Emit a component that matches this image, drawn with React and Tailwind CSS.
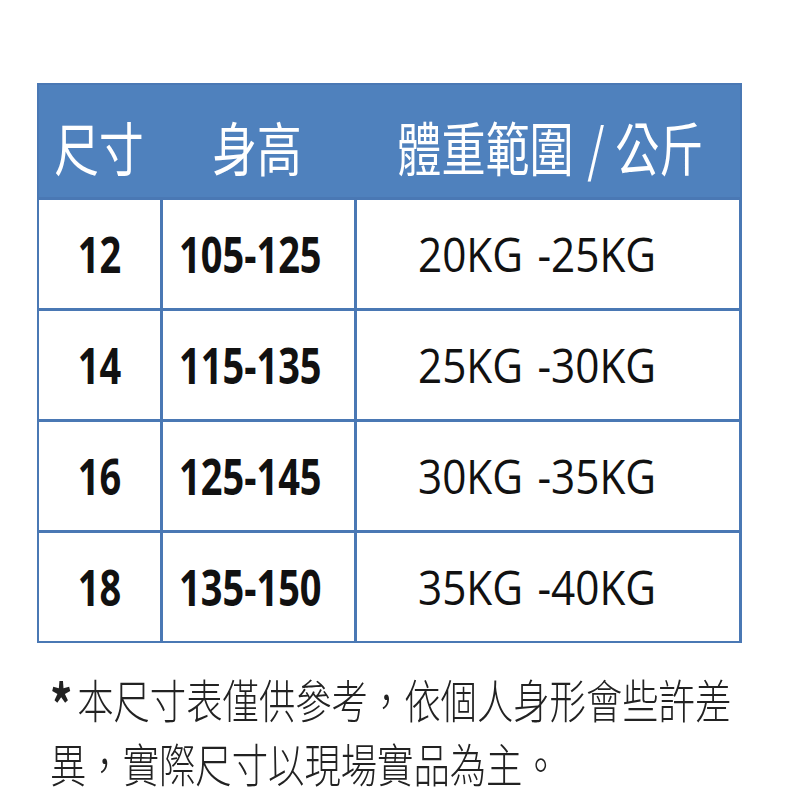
import React from "react";

const rows = [
  ["12", "105-125", "20KG", "25KG"],
  ["14", "115-135", "25KG", "30KG"],
  ["16", "125-145", "30KG", "35KG"],
  ["18", "135-150", "35KG", "40KG"],
];

const cjk = { fontFamily: '"Noto Sans CJK TC", "Noto Sans", sans-serif' };
const latin = { fontFamily: '"Open Sans", "Noto Sans", sans-serif' };

export default function App() {
  return (
    <div className="w-[800px] h-[800px] bg-white overflow-hidden relative">
      <div className="ml-[37px] mt-[83px] w-[705px] bg-[#4a78b4] p-[2px] flex flex-col gap-[3px]">
        <div className="h-[112px] bg-[#4f81bd] grid grid-cols-[121px_194px_384px] text-white" style={cjk}>
          <div className="flex items-center justify-center pt-[10px]">
            <span className="inline-block text-[58px] leading-none scale-x-[0.77] whitespace-nowrap">尺寸</span>
          </div>
          <div className="flex items-center justify-center pt-[10px]">
            <span className="inline-block text-[58px] leading-none scale-x-[0.77] whitespace-nowrap">身高</span>
          </div>
          <div className="flex items-center justify-center pt-[10px] pl-[8px]">
            <span className="inline-block text-[58px] leading-none scale-x-[0.76] whitespace-nowrap">體重範圍<span className="inline-block w-[18px]"></span>/<span className="inline-block w-[14px]"></span>公斤</span>
          </div>
        </div>
        {rows.map((r) => (
          <div key={r[0]} className="h-[108px] grid grid-cols-[121px_191px_382px] gap-[3px]">
            <div className="bg-white flex items-center justify-center">
              <span className="inline-block text-[50px] font-bold leading-none text-[#111] scale-x-[0.76] whitespace-nowrap" style={latin}>{r[0]}</span>
            </div>
            <div className="bg-white flex items-center pl-[16px]">
              <span className="inline-block text-[50px] font-bold leading-none text-[#111] scale-x-[0.76] origin-left whitespace-nowrap" style={latin}>{r[1]}</span>
            </div>
            <div className="bg-white flex items-center pl-[61px]">
              <span className="inline-block text-[47px] leading-none text-[#111] scale-x-[0.9] origin-left whitespace-nowrap" style={latin}>
                {r[2]}<span className="inline-block w-[16px]"></span>-{r[3]}
              </span>
            </div>
          </div>
        ))}
      </div>
      <div className="ml-[50px] mt-[23px] text-[#222]" style={cjk}>
        <div className="h-[64px] whitespace-nowrap flex items-center">
          <span className="inline-block text-[46px] leading-[64px] font-light scale-x-[0.79] origin-left whitespace-nowrap">
            <span className="inline-block font-bold text-[56px] leading-[30px] mr-[6px] translate-y-[8px]">*</span>本尺寸表僅供參考，依個人身形會些許差
          </span>
        </div>
        <div className="h-[64px] whitespace-nowrap flex items-center">
          <span className="inline-block text-[46px] leading-[64px] font-light scale-x-[0.79] origin-left whitespace-nowrap">
            異，實際尺寸以現場實品為主。
          </span>
        </div>
      </div>
    </div>
  );
}
